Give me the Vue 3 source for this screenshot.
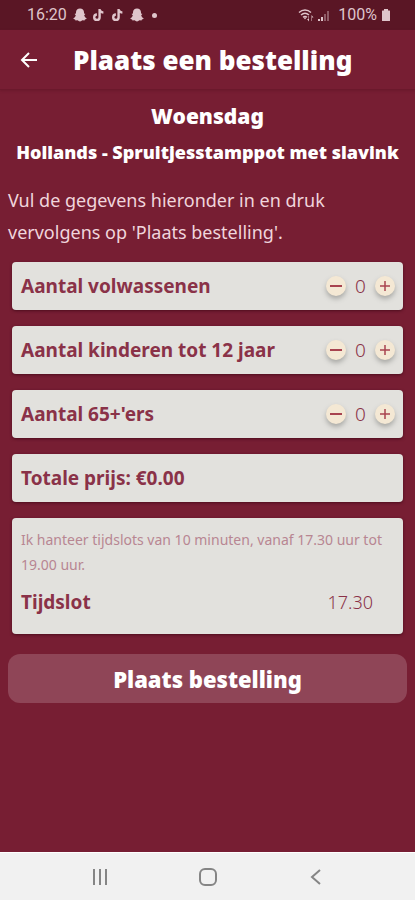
<script setup>
import { computed, reactive, ref } from 'vue'

const groups = reactive([
  { id: 'adults', label: 'Aantal volwassenen', count: 0, price: 9 },
  { id: 'children', label: 'Aantal kinderen tot 12 jaar', count: 0, price: 5 },
  { id: 'seniors', label: "Aantal 65+'ers", count: 0, price: 8 },
])
const slots = ['17.30', '17.40', '17.50', '18.00', '18.10', '18.20', '18.30', '18.40', '18.50', '19.00']
const slot = ref('17.30')
const total = computed(() => groups.reduce((sum, g) => sum + g.count * g.price, 0).toFixed(2))

function change(group, step) {
  group.count = Math.max(0, group.count + step)
}
</script>

<template>
  <div class="screen">
    <div class="status">
      <div class="status-side">
        <span>16:20</span>
        <svg v-for="(kind, i) in ['ghost', 'note', 'note', 'ghost']" :key="i" class="status-icon" viewBox="0 0 14 14">
          <path v-if="kind === 'ghost'" d="M7 .6C4.600.6 3 2.200 3 4.200v1.600l-1-.2c-.5.500-.2 1 .8 1.500C2.600 8.700 1.700 9.700.4 10.200c-.1.700.7 1 1.700 1.200l.4 1 1.900-.1c.9.400 1.500 1.100 2.600 1.100s1.700-.7 2.600-1.100l1.900.1.400-1c1-.2 1.800-.5 1.700-1.200-1.300-.5-2.200-1.500-2.400-3.100 1-.5 1.300-1 .8-1.500l-1 .2V4.200C11 2.200 9.400.6 7 .6Z" fill="currentColor" />
          <path v-else d="M7.600 1v8.200a2.700 2.700 0 1 1-2.700-2.700M7.600 1c.2 2 1.600 3.400 3.800 3.600" fill="none" stroke="currentColor" stroke-width="2.400" />
        </svg>
        <i class="dot"></i>
      </div>
      <div class="status-side right">
        <svg class="signal" viewBox="0 0 32 14">
          <g fill="none" stroke="currentColor" stroke-width="1.400">
            <path d="M1 4.500c3.500-3.300 8.500-3.300 12 0M3 7c2.400-2.200 5.600-2.200 8 0M5 9.300c1.300-1.100 2.700-1.100 4 0" />
          </g>
          <path d="M5.500 9.500h3L7 11.500z" fill="currentColor" />
          <path d="M10.500 8v3H9l2 2.500V8zM14 13V9.500h1.500L13.500 7v6z" fill="currentColor" />
          <path d="M20 11h2v2h-2zM23 9h2v4h-2z" fill="currentColor" />
          <path d="M26 6h2v7h-2zM29 3h2v10h-2z" fill="currentColor" opacity=".4" />
        </svg>
        <span>100%</span>
        <svg class="battery" viewBox="0 0 10 14">
          <path d="M3 1h4v1.500h1.500q.5 0 .5.500v9.500q0 .5-.5.500h-7q-.5 0-.5-.5V3q0-.5.5-.5H3z" fill="currentColor" />
        </svg>
      </div>
    </div>

    <header class="bar">
      <button class="back" type="button" aria-label="Terug">
        <svg viewBox="0 0 18 18"><path d="M17 9H2M9 2 2 9l7 7" fill="none" stroke="currentColor" stroke-width="2" /></svg>
      </button>
      <h1>Plaats een bestelling</h1>
    </header>

    <main class="content">
      <h2>Woensdag</h2>
      <h3>Hollands - Spruitjesstamppot met slavink</h3>
      <p class="intro">Vul de gegevens hieronder in en druk vervolgens op 'Plaats bestelling'.</p>

      <form class="form" @submit.prevent>
        <div class="cards">
          <div v-for="group in groups" :key="group.id" class="card row">
            <label :for="group.id">{{ group.label }}</label>
            <div class="stepper">
              <button type="button" :aria-label="'Minder: ' + group.label" @click="change(group, -1)">
                <svg viewBox="0 0 20 20"><path d="M4 10h12" /></svg>
              </button>
              <output :id="group.id">{{ group.count }}</output>
              <button type="button" :aria-label="'Meer: ' + group.label" @click="change(group, 1)">
                <svg class="plus" viewBox="0 0 20 20"><path d="M5 10h10M10 5v10" /></svg>
              </button>
            </div>
          </div>
          <div class="card row">
            <strong>Totale prijs: €{{ total }}</strong>
          </div>
          <div class="card slot">
            <p>Ik hanteer tijdslots van 10 minuten, vanaf 17.30 uur tot 19.00 uur.</p>
            <div class="slot-row">
              <label for="slot">Tijdslot</label>
              <select id="slot" v-model="slot">
                <option v-for="s in slots" :key="s">{{ s }}</option>
              </select>
            </div>
          </div>
        </div>
        <button class="submit" type="submit">Plaats bestelling</button>
      </form>
    </main>

    <nav class="system">
      <button type="button" aria-label="Recente apps">
        <svg viewBox="0 0 20 20"><path d="M4 2v16M10 2v16M16 2v16" /></svg>
      </button>
      <button type="button" aria-label="Startscherm">
        <svg viewBox="0 0 20 20"><rect x="2" y="2" width="16" height="16" rx="5" /></svg>
      </button>
      <button type="button" aria-label="Vorige">
        <svg viewBox="0 0 20 20"><path d="M14 3 6 10l8 7" /></svg>
      </button>
    </nav>
  </div>
</template>

<style>
body {
  background: #771e33;
}
</style>

<style scoped>
.screen {
  display: flex;
  flex-direction: column;
  min-height: 100vh;
  background: #771e33;
  color: #fff;
  font-family: "Noto Sans", sans-serif;
}

button,
select {
  padding: 0;
  border: 0;
  color: inherit;
  font: inherit;
}

h1,
h2,
h3,
p {
  margin: 0;
}

.status {
  display: flex;
  align-items: center;
  justify-content: space-between;
  box-sizing: border-box;
  height: 30px;
  padding: 0 24px 0 27px;
  background: #5a1625;
  color: #dfc5cb;
  font: 16px/20px Roboto, sans-serif;
}

.status-side {
  display: flex;
  align-items: center;
  gap: 5px;
}

.status-side:first-child {
  gap: 5px;
}

.status-side:first-child span {
  margin-right: 1px;
}

.status-icon {
  width: 14px;
  height: 14px;
}

.dot {
  width: 5px;
  height: 5px;
  margin-left: 3px;
  border-radius: 50%;
  background: currentColor;
}

.right {
  gap: 4px;
}

.signal {
  width: 32px;
  height: 14px;
  margin-right: 4px;
}

.battery {
  width: 10px;
  height: 14px;
}

.bar {
  display: flex;
  align-items: center;
  gap: 35px;
  box-sizing: border-box;
  height: 60px;
  padding: 0 20px;
  border-bottom: 1px solid #6b192c;
  box-shadow: 0 1px 2px #6b192c;
}

.back {
  display: flex;
  background: none;
}

.back svg {
  width: 18px;
  height: 18px;
}

h1 {
  font-size: 26px;
  font-weight: 900;
  line-height: 36px;
}

.content {
  flex: 1;
  padding: 8px 8px 16px;
}

h2 {
  font-size: 21px;
  font-weight: 900;
  line-height: 36px;
  text-align: center;
}

h3 {
  font-size: 18px;
  font-weight: 900;
  line-height: 36px;
  text-align: center;
  white-space: nowrap;
}

.intro {
  max-width: 340px;
  padding-top: 14px;
  color: #f0d5dc;
  font-size: 18px;
  line-height: 32px;
}

.cards {
  display: flex;
  flex-direction: column;
  gap: 16px;
  padding: 14px 4px 20px;
}

.card {
  padding: 0 8px 0 9px;
  border-radius: 4px;
  background: #e2e1dd;
  color: #8a3248;
  box-shadow: 0 1px 3px #4c0d1d;
}

.row {
  display: flex;
  align-items: center;
  justify-content: space-between;
  min-height: 48px;
}

label,
strong {
  font-size: 19px;
  font-weight: 700;
  line-height: 24px;
}

.stepper {
  display: flex;
  align-items: center;
}

.stepper button {
  display: flex;
  width: 20px;
  height: 20px;
  border-radius: 50%;
  background: #f4e8d4;
  box-shadow: 0 3px 5px #a9a9a5;
}

.stepper svg {
  width: 20px;
  height: 20px;
  fill: none;
  stroke: #a8434f;
  stroke-width: 2;
}

.stepper .plus {
  stroke-width: 1.5;
}

output {
  width: 29px;
  font-size: 19px;
  font-weight: 300;
  line-height: 24px;
  text-align: center;
}

.slot {
  padding: 9px 8px 20px 9px;
}

.slot p {
  color: #b88692;
  font-size: 14px;
  line-height: 25px;
}

.slot-row {
  display: flex;
  align-items: center;
  justify-content: space-between;
  padding: 13px 22px 0 0;
}

select {
  appearance: none;
  background: none;
  font-size: 18px;
  font-weight: 300;
  line-height: 24px;
  text-align: right;
}

.submit {
  display: block;
  width: 100%;
  height: 49px;
  border-radius: 12px;
  background: #8f4557;
  font-size: 22px;
  font-weight: 900;
}

.system {
  display: flex;
  align-items: center;
  justify-content: space-between;
  box-sizing: border-box;
  height: 48px;
  padding: 0 89px 0 90px;
  border-top: 1px solid #fff;
  background: #f1f1f1;
  color: #858585;
}

.system button {
  display: flex;
  background: none;
}

.system svg {
  width: 20px;
  height: 20px;
  fill: none;
  stroke: currentColor;
  stroke-width: 2;
}
</style>
